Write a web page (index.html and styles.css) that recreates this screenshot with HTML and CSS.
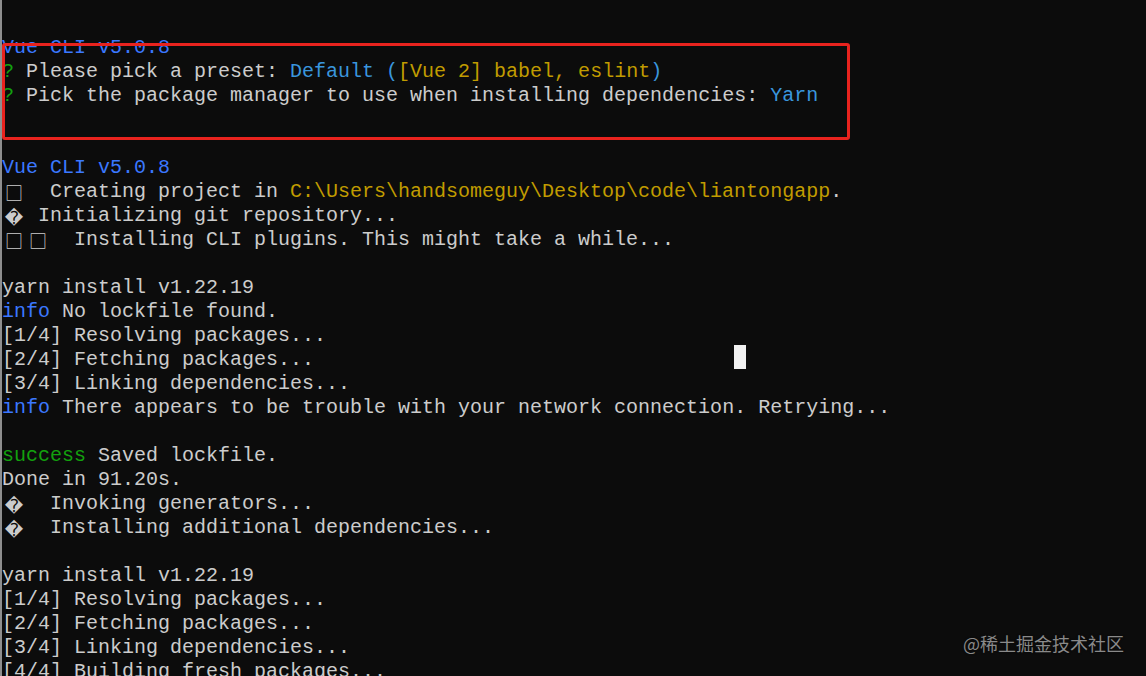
FILE: index.html
```html
<!DOCTYPE html>
<html>
<head>
<meta charset="utf-8">
<link rel="stylesheet" href="styles.css">
</head>
<body>
<div class="term">
  <div class="line"><span class="blue">Vue CLI v5.0.8</span></div>
  <div class="line"><span class="green">?</span> Please pick a preset: <span class="cyan">Default (</span><span class="yellow">[Vue 2] babel, eslint</span><span class="cyan">)</span></div>
  <div class="line"><span class="green">?</span> Pick the package manager to use when installing dependencies: <span class="cyan">Yarn</span></div>
  <div class="line"> </div>
  <div class="line"> </div>
  <div class="line"><span class="blue">Vue CLI v5.0.8</span></div>
  <div class="line"><span class="wide">□</span><span class="gap2"></span>Creating project in <span class="yellow">C:\Users\handsomeguy\Desktop\code\liantongapp</span>.</div>
  <div class="line"><span class="wide">�</span><span class="gap1"></span>Initializing git repository...</div>
  <div class="line"><span class="wide">□</span><span class="wide">□</span><span class="gap2"></span>Installing CLI plugins. This might take a while...</div>
  <div class="line"> </div>
  <div class="line">yarn install v1.22.19</div>
  <div class="line"><span class="blue">info</span> No lockfile found.</div>
  <div class="line">[1/4] Resolving packages...</div>
  <div class="line">[2/4] Fetching packages...</div>
  <div class="line">[3/4] Linking dependencies...</div>
  <div class="line"><span class="blue">info</span> There appears to be trouble with your network connection. Retrying...</div>
  <div class="line"> </div>
  <div class="line"><span class="green">success</span> Saved lockfile.</div>
  <div class="line">Done in 91.20s.</div>
  <div class="line"><span class="wide">�</span><span class="gap2"></span>Invoking generators...</div>
  <div class="line"><span class="wide">�</span><span class="gap2"></span>Installing additional dependencies...</div>
  <div class="line"> </div>
  <div class="line">yarn install v1.22.19</div>
  <div class="line">[1/4] Resolving packages...</div>
  <div class="line">[2/4] Fetching packages...</div>
  <div class="line">[3/4] Linking dependencies...</div>
  <div class="line">[4/4] Building fresh packages...</div>
</div>
<div class="highlight"></div>
<div class="cursor"></div>
<div class="watermark">@稀土掘金技术社区</div>
</body>
</html>
```
FILE: styles.css
```css
html, body {
  margin: 0;
  padding: 0;
  height: 100%;
  overflow: hidden;
  background: #0c0c0c;
}
.term {
  box-sizing: border-box;
  height: 676px;
  border-left: 2px solid #8e8e8e;
  padding-top: 36px;
  color: #cccccc;
  font-family: "Liberation Mono", "Noto Sans CJK SC", monospace;
  font-size: 20px;
  line-height: 24px;
  overflow: hidden;
}
.line {
  height: 24px;
  white-space: pre;
}
.wide {
  display: inline-block;
  width: 24px;
  text-align: center;
  font-family: "Noto Sans CJK SC", "DejaVu Sans", sans-serif;
  font-size: 18px;
  line-height: 24px;
  vertical-align: top;
}
.gap1 {
  display: inline-block;
  width: 12px;
}
.gap2 {
  display: inline-block;
  width: 24px;
}
.blue { color: #3b78ff; }
.cyan { color: #3a96dd; }
.yellow { color: #c19c00; }
.green { color: #13a10e; }
.highlight {
  position: absolute;
  left: 2px;
  top: 43px;
  width: 842px;
  height: 91px;
  border: 3px solid #e8231e;
  border-radius: 3px;
}
.cursor {
  position: absolute;
  left: 734px;
  top: 345px;
  width: 12px;
  height: 24px;
  background: #f2f2f2;
}
.watermark {
  position: absolute;
  right: 22px;
  top: 631px;
  font-family: "Noto Sans CJK SC", sans-serif;
  font-size: 18px;
  line-height: 24px;
  color: #8a8a8a;
  text-shadow: 0 0 2px rgba(0,0,0,0.6);
}
```
